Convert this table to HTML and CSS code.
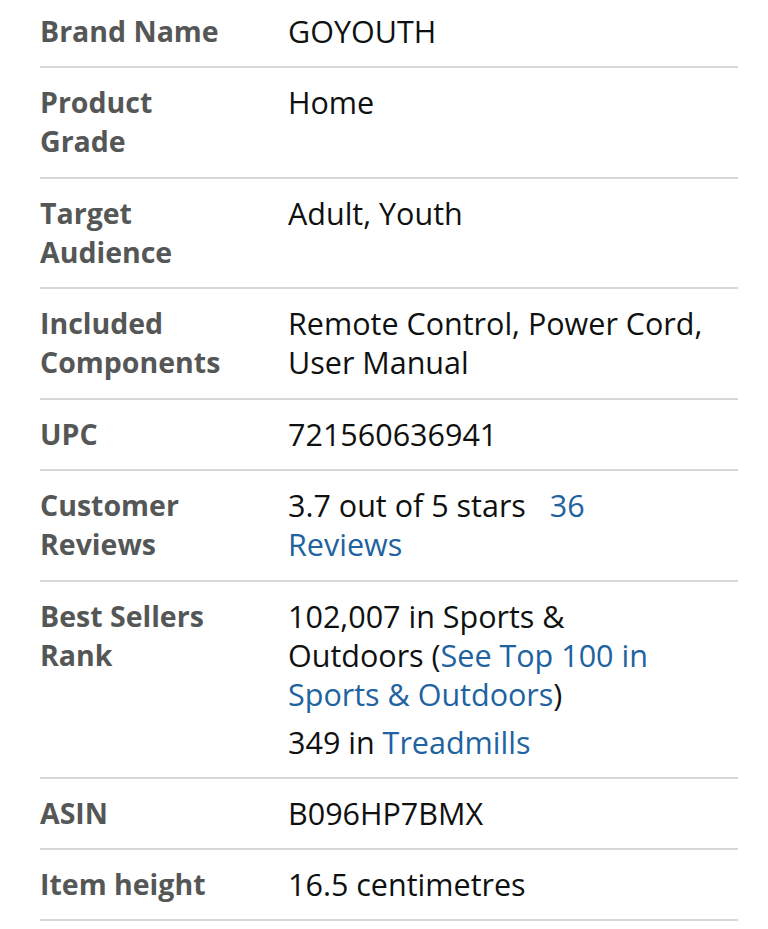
FILE: index.html
```html
<!DOCTYPE html>
<html>
<head>
<meta charset="utf-8">
<link rel="stylesheet" href="styles.css">
</head>
<body>
<table class="specs">
  <colgroup><col class="c-label"><col class="c-value"></colgroup>
  <tr><th>Brand Name</th><td>GOYOUTH</td></tr>
  <tr><th>Product Grade</th><td>Home</td></tr>
  <tr><th>Target Audience</th><td>Adult, Youth</td></tr>
  <tr><th>Included Components</th><td>Remote Control, Power Cord, User Manual</td></tr>
  <tr><th>UPC</th><td>721560636941</td></tr>
  <tr><th>Customer Reviews</th><td>3.7 out of 5 stars&nbsp;&nbsp; <a class="link">36 Reviews</a></td></tr>
  <tr><th>Best Sellers Rank</th><td><ul class="ranks"><li>102,007 in Sports &amp; Outdoors (<a class="link">See Top 100 in Sports &amp; Outdoors</a>)</li><li>349 in <a class="link">Treadmills</a></li></ul></td></tr>
  <tr><th>ASIN</th><td>B096HP7BMX</td></tr>
  <tr><th>Item height</th><td>16.5 centimetres</td></tr>
</table>
</body>
</html>
```
FILE: styles.css
```css
html, body {
  margin: 0;
  background: #fff;
}
body {
  padding: 0 30px 0 40px;
  font-family: "Open Sans", "Noto Sans", sans-serif;
  font-size: 30.5px;
  line-height: 39.3px;
  color: #0f1111;
}
.specs {
  width: 698px;
  table-layout: fixed;
  border-collapse: collapse;
  margin-top: -3.3px;
}
.c-label { width: 248px; }
.c-value { width: 450px; }
.specs tr {
  border-bottom: 2px solid #d5d9d9;
}
.specs th, .specs td {
  padding: 15px 0;
  vertical-align: top;
  text-align: left;
}
.specs th {
  padding-right: 58px;
  font-size: 28.5px;
  font-weight: 700;
  color: #555757;
}
.specs td {
  padding-right: 33.5px;
}
.link {
  color: #2162a1;
  text-decoration: none;
}
.ranks {
  list-style: none;
  margin: 0;
  padding: 0;
}
.ranks li + li {
  margin-top: 8px;
}
```
